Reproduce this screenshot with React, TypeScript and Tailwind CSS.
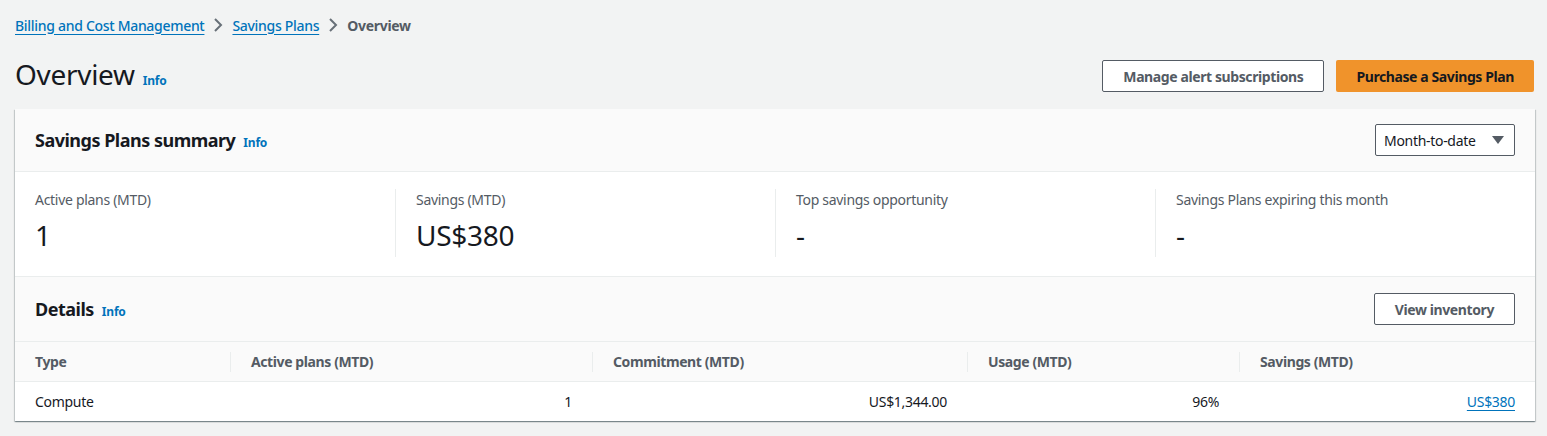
import React from "react";

const font = { fontFamily: '"Noto Sans", "Open Sans", Arial, sans-serif' };

function Chevron() {
  return (
    <svg width="16" height="16" viewBox="0 0 16 16" className="mx-[6px]">
      <polyline points="5,2 11,8 5,14" fill="none" stroke="#687078" strokeWidth="2" />
    </svg>
  );
}

function Info() {
  return <span className="text-[12px] font-bold text-[#0073bb] ml-[8px] leading-none tracking-[-0.2px]">Info</span>;
}

export default function App() {
  const cols = [
    { label: "Active plans (MTD)", value: "1" },
    { label: "Savings (MTD)", value: "US$380" },
    { label: "Top savings opportunity", value: "-" },
    { label: "Savings Plans expiring this month", value: "-" },
  ];
  return (
    <div className="min-h-[436px] bg-[#f2f3f3] text-[#16191f] tracking-[-0.3px]" style={font}>
      <div className="pl-[15px] pr-[12px] pt-[14px]">
        {/* breadcrumb */}
        <div className="flex items-center h-[22px] text-[14px]">
          <a className="text-[#0073bb] underline underline-offset-[3px] font-medium">Billing and Cost Management</a>
          <Chevron />
          <a className="text-[#0073bb] underline underline-offset-[3px] font-medium">Savings Plans</a>
          <Chevron />
          <span className="text-[#545b64] font-bold">Overview</span>
        </div>
        {/* header */}
        <div className="flex items-center justify-between mt-[24px] h-[32px]">
          <div className="flex items-baseline">
            <h1 className="text-[28px] leading-none font-normal text-[#16191f] mt-[-4px]">Overview</h1>
            <Info />
          </div>
          <div className="flex gap-[12px] pr-[1px]">
            <button className="h-[32px] px-[20px] border border-[#545b64] rounded-[2px] bg-white text-[14px] font-bold text-[#545b64] tracking-[-0.4px]">
              Manage alert subscriptions
            </button>
            <button className="h-[32px] px-[20px] rounded-[2px] bg-[#f0932b] text-[14px] font-bold text-[#16191f] tracking-[-0.4px]">
              Purchase a Savings Plan
            </button>
          </div>
        </div>
        {/* card */}
        <div
          className="mt-[17px] bg-white"
          style={{
            boxShadow:
              "0 1px 1px 0 rgba(0,28,36,.3), 1px 1px 1px 0 rgba(0,28,36,.15), -1px 1px 1px 0 rgba(0,28,36,.15)",
          }}
        >
          <div className="flex items-center justify-between h-[63px] px-[20px] bg-[#fafafa] border-b border-[#eaeded]">
            <div className="flex items-baseline">
              <h2 className="text-[18px] font-bold leading-none tracking-[-0.5px]">Savings Plans summary</h2>
              <Info />
            </div>
            <div className="flex items-center justify-between w-[140px] h-[32px] border border-[#545b64] rounded-[2px] bg-white pl-[8px] pr-[10px] text-[14px]">
              <span>Month-to-date</span>
              <svg width="12" height="10" viewBox="0 0 12 10">
                <polygon points="0,1 12,1 6,9" fill="#545b64" />
              </svg>
            </div>
          </div>
          <div className="grid grid-cols-4 h-[105px] items-start pt-[17px] border-b border-[#eaeded]">
            {cols.map((c, i) => (
              <div key={i} className={i === 0 ? "pl-[20px]" : "pl-[20px] border-l border-[#eaeded] h-[68px]"}>
                <div className="text-[14px] text-[#545b64] leading-[22px]">{c.label}</div>
                <div className="text-[28px] leading-[36px] mt-[6px]">{c.value}</div>
              </div>
            ))}
          </div>
          <div className="flex items-center justify-between h-[64px] px-[20px] bg-[#fafafa]">
            <div className="flex items-baseline">
              <h2 className="text-[18px] font-bold leading-none tracking-[-0.5px]">Details</h2>
              <Info />
            </div>
            <button className="h-[32px] px-[20px] border border-[#545b64] rounded-[2px] bg-white text-[14px] font-bold text-[#545b64] tracking-[-0.4px]">
              View inventory
            </button>
          </div>
          <table className="w-full table-fixed text-[14px]">
            <colgroup>
              <col style={{ width: 215 }} />
              <col style={{ width: 362 }} />
              <col style={{ width: 375 }} />
              <col style={{ width: 272 }} />
              <col />
            </colgroup>
            <thead>
              <tr className="bg-[#fafafa] h-[40px] border-y border-[#eaeded]">
                {["Type", "Active plans (MTD)", "Commitment (MTD)", "Usage (MTD)", "Savings (MTD)"].map((h, i) => (
                  <th key={h} className="p-0 text-left font-bold text-[#545b64] tracking-[-0.4px]">
                    <div className={i === 0 ? "pl-[20px]" : "pl-[20px] border-l border-[#eaeded] leading-[20px]"}>{h}</div>
                  </th>
                ))}
              </tr>
            </thead>
            <tbody>
              <tr className="h-[39px]">
                <td className="pl-[20px]">Compute</td>
                <td className="pr-[20px] text-right">1</td>
                <td className="pr-[20px] text-right">US$1,344.00</td>
                <td className="pr-[20px] text-right">96%</td>
                <td className="pr-[20px] text-right">
                  <a className="text-[#0073bb] underline underline-offset-[3px]">US$380</a>
                </td>
              </tr>
            </tbody>
          </table>
        </div>
      </div>
    </div>
  );
}
